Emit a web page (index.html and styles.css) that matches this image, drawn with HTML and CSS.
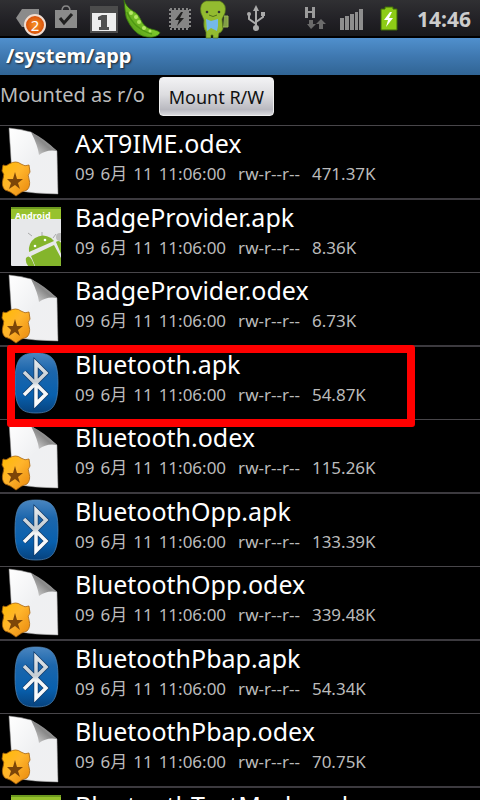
FILE: index.html
```html
<!DOCTYPE html>
<html lang="en">
<head>
<meta charset="utf-8">
<meta name="viewport" content="width=device-width, initial-scale=1">
<title>/system/app</title>
<link rel="stylesheet" href="styles.css">
</head>
<body>
<svg class="sprites" aria-hidden="true">
  <defs>
    <linearGradient id="paper" x1="0" y1="0" x2="1" y2="1"><stop offset="0" stop-color="#fff"/><stop offset=".5" stop-color="#eff0f2"/><stop offset="1" stop-color="#f0f0f1"/></linearGradient>
    <linearGradient id="fold" x1="0" y1="1" x2="1" y2="0"><stop offset="0" stop-color="#e2e2e2"/><stop offset=".5" stop-color="#888"/><stop offset="1" stop-color="#c4c4c4"/></linearGradient>
    <linearGradient id="gold" x1="0" y1="0" x2="1" y2="1"><stop offset="0" stop-color="#fb0"/><stop offset=".45" stop-color="#ffb52c"/><stop offset="1" stop-color="#e8860c"/></linearGradient>
    <linearGradient id="blue" x1="0" y1="0" x2="0" y2="1"><stop offset="0" stop-color="#4a86c0"/><stop offset=".3" stop-color="#1c66ac"/><stop offset=".7" stop-color="#0860ae"/><stop offset="1" stop-color="#07427d"/></linearGradient>
    <linearGradient id="silver" gradientUnits="userSpaceOnUse" x1="0" y1="14" x2="0" y2="60"><stop offset="0" stop-color="#e4e8eb"/><stop offset=".45" stop-color="#c6cdd3"/><stop offset=".55" stop-color="#f2f4f5"/><stop offset="1" stop-color="#fff"/></linearGradient>
    <linearGradient id="pea" x1="0" y1="1" x2="1" y2="0"><stop offset="0" stop-color="#3f860c"/><stop offset=".5" stop-color="#7cc62a"/><stop offset="1" stop-color="#4b9312"/></linearGradient>
    <radialGradient id="orange"><stop offset="0" stop-color="#f79325"/><stop offset="1" stop-color="#d54b08"/></radialGradient>
    <clipPath id="card"><rect x="11" y="7" width="50" height="59" rx="1"/></clipPath>
  </defs>
  <symbol id="odex" viewBox="0 0 72 72">
    <path d="M9 2Q20 3 31 6L57 25 58 68Q35 68 13 64Z" fill="url(#paper)" stroke="#8c8c8c" stroke-width=".5"/>
    <path d="M31 6Q38 20 39 29 47 23 57 25Q45 13 31 6Z" fill="url(#fold)"/>
    <path d="M3 39Q6 41 9 38 16 34 21 38 25 41 29 39L30 46Q27 49 29 53 31 60 27 64 22 65 16 70 10 65 5 64 1 60 3 53 5 48 2 45Z" fill="url(#gold)" stroke="#a9640c" stroke-width=".8"/>
    <path d="M15 46 17 53 23 53 18 57 20 63 15 59 9 63 11 57 7 53 13 53Z" fill="#7c4508"/>
  </symbol>
  <symbol id="apk" viewBox="0 0 72 72">
    <g clip-path="url(#card)">
      <rect x="11" y="7" width="50" height="59" fill="#e7e8ea"/>
      <rect x="11" y="7" width="50" height="12" fill="#97c22d"/>
      <rect x="11" y="7" width="50" height="2" fill="#6c991e"/>
      <text x="15" y="19" class="apk-label">Android</text>
      <circle cx="60" cy="37" r="4" fill="#bbb"/>
      <path d="M32 36 28 33M42 36V32M53 38 56 34" stroke="#aaa"/>
      <path d="M29 52Q28 43 35 38 43 33 51 38L54 41Z" fill="#84b52b"/>
      <path d="M31 56 54 45 61 58V68H36Z" fill="#84b52b"/>
      <path d="M26 58Q29 54 32 60L35 67H29Q25 63 26 58ZM56 42Q60 39 62 45V56Z" fill="#84b52b"/>
      <circle cx="35" cy="46" r="1.300" fill="#fff"/><circle cx="45" cy="40" r="1.300" fill="#fff"/>
    </g>
  </symbol>
  <symbol id="bt" viewBox="0 0 72 72">
    <path d="M36 6C51 6 58 11 58 36S51 66 36 66 15 61 15 36 21 6 36 6Z" fill="url(#blue)" stroke="#5488b8" stroke-width=".7"/>
    <path d="M24 25 46 47 36 57V16L46 26 24 48" fill="none" stroke="#123c6b" stroke-width="5"/>
    <path d="M24 25 46 47 36 57V16L46 26 24 48" fill="none" stroke="url(#silver)" stroke-width="3.500"/>
  </symbol>
</svg>

<header class="status">
  <div class="icons">
    <svg viewBox="9 0 38 40"><path d="M22 9H39V27H22L16 18Z" fill="#8b8b8b"/><circle cx="35" cy="25" r="10" fill="url(#orange)" stroke="#f1ddd0" stroke-width="2"/><text x="35" y="31" class="badge">2</text></svg>
    <svg viewBox="47 0 38 40"><path d="M62 11Q62 6 66 6T70 11" fill="none" stroke="#888" stroke-width="1.500"/><path d="M55 10H77V28H55Z" fill="#8b8b8b"/><path d="M60 18 64 23 72 14" fill="none" stroke="#202020" stroke-width="3"/></svg>
    <svg viewBox="85 0 38 40"><path d="M90 6H118V33H90Z" fill="#4c4c4c"/><path d="M92 13H116V31H92Z" fill="#eee"/><path d="M102 15H107V27H109V30H99V27H101V20H98V17Z" fill="#505050"/></svg>
    <svg viewBox="123 0 38 40"><path d="M124 0Q126 7 133 11 138 13 141 20 144 27 151 29 160 31 160 33 157 38 147 37 137 36 130 25 125 18 125 10Z" fill="url(#pea)" stroke="#326e0b" stroke-width=".8"/><path d="M127 12Q134 29 152 34" fill="none" stroke="#4f9813" stroke-width="1.500"/><g fill="#b6e765"><circle cx="131" cy="13" r="2"/><circle cx="136" cy="17" r="2"/><circle cx="139" cy="22" r="2"/><circle cx="144" cy="28" r="2"/><circle cx="150" cy="31" r="1.500"/></g></svg>
    <svg viewBox="161 0 38 40"><rect x="171" y="10" width="18" height="18" fill="#858585"/><path d="M170 9V29M190 9V29M170 9H190M170 29H190" fill="none" stroke="#858585" stroke-width="2" stroke-dasharray="2 2"/><path d="M181 12 175 20H179L177 26 184 18H180L183 12Z" fill="#202020"/></svg>
    <svg viewBox="199 0 38 40"><path d="M201 13Q199 3 206 1H220Q227 4 225 13L222 19 223 29Q221 33 219 33L218 38H213V35H211V38H206V32Q203 28 204 20Z" fill="#93bb30" stroke="#55771a" stroke-width=".7"/><path d="M224 16H228V27H223" fill="#829f45" stroke="#9bb657"/><path d="M206 19 211 21 218 19V26L217 31 211 28 207 31Z" fill="#74b9e9"/><circle cx="207" cy="12" r="1.300" fill="#333"/><circle cx="219" cy="12" r="1.300" fill="#333"/><path d="M209 15Q213 18 217 15" fill="none" stroke="#51701a"/></svg>
    <svg viewBox="237 0 38 40"><path d="M256 9V28M249 14V19L256 24M263 14V17L256 22" fill="none" stroke="#aaa" stroke-width="2"/><path d="M256 5 259 11H253Z" fill="#aaa"/><circle cx="249" cy="14" r="2" fill="#aaa"/><path d="M261 12H265V16H261Z" fill="#aaa"/><circle cx="256" cy="28" r="3" fill="#aaa"/></svg>
  </div>
  <div class="icons">
    <svg viewBox="295 0 38 40"><path d="M305 7H308V11H312V7H315V18H312V13H308V18H305Z" fill="#9b9b9b"/><path d="M309 20H313V24H316L311 29 307 24H309ZM319 29H323V24H326L321 19 316 24H319Z" fill="#6b6b6b"/></svg>
    <svg viewBox="333 0 38 40"><path d="M340 18H344V30H340ZM345 16H349V30H345ZM350 14H354V30H350ZM355 12H358V30H355ZM359 9H363V30H359Z" fill="#8e8e8e"/></svg>
    <svg viewBox="371 0 38 40"><path d="M385 7H393V9H397V30H381V9H385Z" fill="#8dcc16" stroke="#3e6b08"/><path d="M390 12 384 20H388L386 27 393 18H389L392 12Z" fill="#fff"/></svg>
    <time class="clock">14:46</time>
  </div>
</header>

<h1 class="path">/system/app</h1>

<div class="mount">
  <span>Mounted as r/o</span>
  <button type="button">Mount R/W</button>
</div>

<main>
<ul class="files">
  <li><svg><use href="#odex"/></svg><div><h2>AxT9IME.odex</h2><p><time><span>09</span> <span>6月</span> <span>11</span> <span>11:06:00</span></time> <span>rw-r--r--</span> <span>471.37K</span></p></div></li>
  <li><svg><use href="#apk"/></svg><div><h2>BadgeProvider.apk</h2><p><time><span>09</span> <span>6月</span> <span>11</span> <span>11:06:00</span></time> <span>rw-r--r--</span> <span>8.36K</span></p></div></li>
  <li><svg><use href="#odex"/></svg><div><h2>BadgeProvider.odex</h2><p><time><span>09</span> <span>6月</span> <span>11</span> <span>11:06:00</span></time> <span>rw-r--r--</span> <span>6.73K</span></p></div></li>
  <li class="marked"><svg><use href="#bt"/></svg><div><h2>Bluetooth.apk</h2><p><time><span>09</span> <span>6月</span> <span>11</span> <span>11:06:00</span></time> <span>rw-r--r--</span> <span>54.87K</span></p></div></li>
  <li><svg><use href="#odex"/></svg><div><h2>Bluetooth.odex</h2><p><time><span>09</span> <span>6月</span> <span>11</span> <span>11:06:00</span></time> <span>rw-r--r--</span> <span>115.26K</span></p></div></li>
  <li><svg><use href="#bt"/></svg><div><h2>BluetoothOpp.apk</h2><p><time><span>09</span> <span>6月</span> <span>11</span> <span>11:06:00</span></time> <span>rw-r--r--</span> <span>133.39K</span></p></div></li>
  <li><svg><use href="#odex"/></svg><div><h2>BluetoothOpp.odex</h2><p><time><span>09</span> <span>6月</span> <span>11</span> <span>11:06:00</span></time> <span>rw-r--r--</span> <span>339.48K</span></p></div></li>
  <li><svg><use href="#bt"/></svg><div><h2>BluetoothPbap.apk</h2><p><time><span>09</span> <span>6月</span> <span>11</span> <span>11:06:00</span></time> <span>rw-r--r--</span> <span>54.34K</span></p></div></li>
  <li><svg><use href="#odex"/></svg><div><h2>BluetoothPbap.odex</h2><p><time><span>09</span> <span>6月</span> <span>11</span> <span>11:06:00</span></time> <span>rw-r--r--</span> <span>70.75K</span></p></div></li>
  <li><svg><use href="#apk"/></svg><div><h2>BluetoothTestMode.apk</h2></div></li>
</ul>
</main>
</body>
</html>
```
FILE: styles.css
```css
*,
*::after {
  box-sizing: border-box;
}

body {
  margin: 0;
  height: 100vh;
  display: flex;
  flex-direction: column;
  overflow: hidden;
  background: #000;
  color: #fff;
  font-family: "Noto Sans", "Noto Sans CJK SC", sans-serif;
}

h1, h2, p, ul {
  margin: 0;
  padding: 0;
  font-weight: 400;
}

.sprites {
  position: absolute;
  width: 0;
  height: 0;
}

.status {
  flex: none;
  height: 38px;
  display: flex;
  justify-content: space-between;
  padding: 0 9px;
  background: linear-gradient(#303033, #201f24 60%, #19191b 94%, #000 96%);
}

.icons {
  display: flex;
  height: 38px;
}

.icons svg {
  width: 38px;
  height: 40px;
  position: relative;
}

.badge {
  font-size: 15px;
  fill: #fff;
  text-anchor: middle;
}

.clock {
  width: 62px;
  text-align: right;
  font-size: 21px;
  line-height: 38px;
  font-weight: 700;
  color: #ccc;
}

.path {
  flex: none;
  height: 37px;
  padding-left: 6px;
  background: linear-gradient(#5090cd, #3f78b0 50%, #306494);
  font-size: 20px;
  line-height: 36px;
  font-weight: 700;
  text-shadow: 1px 1px 2px #222;
}

.mount {
  flex: none;
  height: 50px;
  display: flex;
  align-items: flex-start;
  gap: 14px;
  font-size: 20px;
  line-height: 40px;
  color: #bbb;
}

.mount button {
  height: 39px;
  margin-top: 2px;
  padding: 0 9px;
  border: 1px solid #eee;
  border-radius: 4px;
  background: linear-gradient(#f2f2f4, #dddde0 45%, #b9b9c0 85%, #d8d8dc);
  font: inherit;
  font-size: 18px;
  line-height: 34px;
  color: #111;
}

main {
  flex: 1;
  min-height: 0;
  overflow: hidden;
}

.files {
  list-style: none;
}

.files li {
  position: relative;
  display: flex;
  gap: 3px;
  border-top: 1px solid #48464a;
}

.files li:nth-child(even) {
  border-top: 2px solid #3c3a3f;
}

.files svg {
  flex: none;
  width: 72px;
  height: 72px;
}

.files h2 {
  font-size: 25px;
  line-height: 34px;
}

.files p {
  display: flex;
  gap: 12px;
  font-size: 17px;
  line-height: 28px;
  color: #bbb;
}

.files time {
  display: flex;
  gap: 6px;
}

.apk-label {
  font-size: 9px;
  font-weight: 700;
  fill: #fff;
}

.marked::after {
  content: "";
  position: absolute;
  z-index: 1;
  top: -2px;
  left: 7px;
  width: 408px;
  height: 82px;
  border: 8px solid #f00;
  border-radius: 3px;
}
```
